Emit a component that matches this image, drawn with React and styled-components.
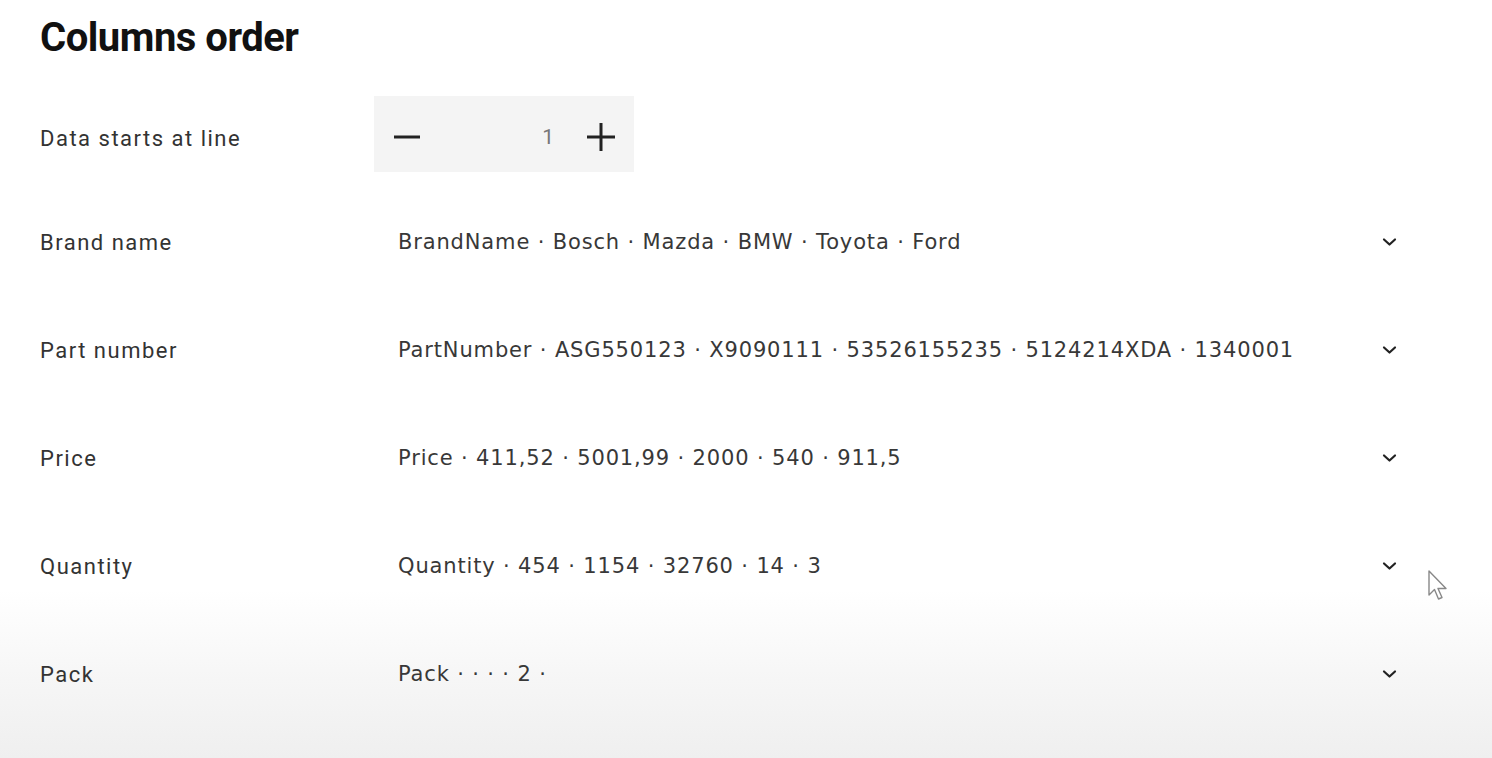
import React from "react";
import styled, { createGlobalStyle } from "styled-components";

const Global = createGlobalStyle`
  html, body { margin: 0; padding: 0; }
  body {
    background: #ffffff;
    font-family: Roboto, "Liberation Sans", sans-serif;
    color: #222;
  }
`;

const Page = styled.div`
  position: relative;
  width: 1492px;
  height: 758px;
  overflow: hidden;
  box-sizing: border-box;
  padding: 14px 95px 0 40px;
  background: linear-gradient(
    to bottom,
    #ffffff 0px,
    #ffffff 590px,
    #f6f6f6 680px,
    #efefef 758px
  );
`;

const Title = styled.h1`
  margin: 0;
  font-family: Roboto, "Liberation Sans", sans-serif;
  font-weight: 700;
  font-size: 40px;
  line-height: 48px;
  letter-spacing: -0.5px;
  color: #111;
`;

const List = styled.div`
  display: flex;
  flex-direction: column;
  margin-top: 26px;
`;

const Row = styled.div`
  display: grid;
  grid-template-columns: 334px 1fr;
  align-items: center;
  height: ${(p) => p.$h}px;
`;

const Label = styled.div`
  font-family: Roboto, "Liberation Sans", sans-serif;
  font-size: 22px;
  letter-spacing: 1.5px;
  color: #333;
`;

const Stepper = styled.div`
  display: flex;
  align-items: center;
  width: 260px;
  height: 76px;
  box-sizing: border-box;
  padding: 6px 18px 0;
  margin-bottom: 8px;
  background: #f4f4f4;
`;

const StepButton = styled.span`
  display: flex;
  align-items: center;
  justify-content: center;
  width: 30px;
  height: 30px;
  color: #222;
`;

const StepValue = styled.span`
  flex: 1;
  text-align: right;
  padding-right: 32px;
  font-family: Roboto, "Liberation Sans", sans-serif;
  font-size: 21px;
  color: #777;
`;

const Select = styled.div`
  display: flex;
  align-items: center;
  justify-content: space-between;
  padding-left: 24px;
`;

const Value = styled.span`
  font-family: "DejaVu Sans", "Liberation Sans", sans-serif;
  font-size: 21px;
  letter-spacing: 0.85px;
  color: #383838;
`;

const Chevron = styled.span`
  display: flex;
  width: 16px;
  justify-content: center;
  color: #222;
`;

const Cursor = styled.svg`
  position: absolute;
  left: 1427px;
  top: 569px;
`;

const rows = [
  { label: "Brand name", value: "BrandName · Bosch · Mazda · BMW · Toyota · Ford" },
  {
    label: "Part number",
    value: "PartNumber · ASG550123 · X9090111 · 53526155235 · 5124214XDA · 1340001",
  },
  { label: "Price", value: "Price · 411,52 · 5001,99 · 2000 · 540 · 911,5" },
  { label: "Quantity", value: "Quantity · 454 · 1154 · 32760 · 14 · 3" },
  { label: "Pack", value: "Pack · · · · 2 ·" },
];

const ChevronIcon = () => (
  <svg width="15" height="10" viewBox="0 0 15 10" fill="none">
    <path d="M2 2.5 L7.5 7.5 L13 2.5" stroke="#222" strokeWidth="2.2" strokeLinecap="round" strokeLinejoin="round" />
  </svg>
);

export default function App() {
  return (
    <Page>
      <Global />
      <Title>Columns order</Title>
      <List>
        <Row $h={100}>
          <Label>Data starts at line</Label>
          <Stepper>
            <StepButton>
              <svg width="30" height="30" viewBox="0 0 30 30">
                <path d="M2 15 H28" stroke="#222" strokeWidth="3" />
              </svg>
            </StepButton>
            <StepValue>1</StepValue>
            <StepButton>
              <svg width="30" height="30" viewBox="0 0 30 30">
                <path d="M1 15 H29 M15 1 V29" stroke="#222" strokeWidth="3" />
              </svg>
            </StepButton>
          </Stepper>
        </Row>
        {rows.map((r) => (
          <Row key={r.label} $h={108}>
            <Label>{r.label}</Label>
            <Select>
              <Value>{r.value}</Value>
              <Chevron>
                <ChevronIcon />
              </Chevron>
            </Select>
          </Row>
        ))}
      </List>
      <Cursor width="24" height="34" viewBox="0 0 24 34">
        <path
          d="M2 2 L2 26 L7.5 20.5 L11.5 30 L15 28.5 L11 19.5 L19 19.5 Z"
          fill="#fff"
          stroke="#888"
          strokeWidth="1.4"
          strokeLinejoin="round"
        />
      </Cursor>
    </Page>
  );
}
